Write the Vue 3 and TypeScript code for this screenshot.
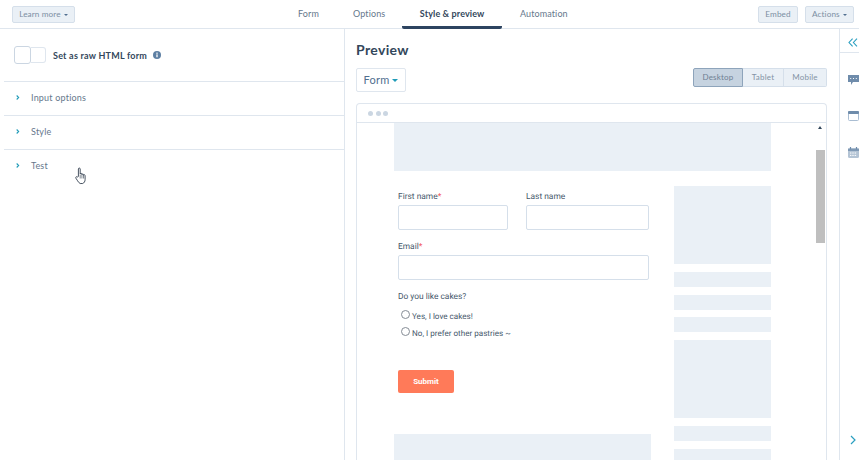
<script setup lang="ts">
const tabs = ['Form', 'Options', 'Style & preview', 'Automation']
const sections = ['Input options', 'Style', 'Test']
const views = ['Desktop', 'Tablet', 'Mobile']
const asideBlocks = [78, 15, 15, 15, 78, 15, 15]
const choices = ['Yes, I love cakes!', 'No, I prefer other pastries ~']
</script>

<template>
  <div class="app">
    <header class="topbar">
      <div class="top-side">
        <button class="btn learn">Learn more <i class="caret"></i></button>
      </div>
      <nav class="tabs">
        <span v-for="(t, i) in tabs" :key="t" class="tab" :class="{ active: i === 2 }">{{ t }}</span>
      </nav>
      <div class="top-side right">
        <button class="btn embed">Embed</button>
        <button class="btn actions">Actions <i class="caret"></i></button>
      </div>
    </header>

    <main class="body">
      <section class="left">
        <div class="raw">
          <div class="toggle"><span class="knob"></span><span class="track"></span></div>
          <strong>Set as raw HTML form</strong>
          <svg class="info" viewBox="0 0 10 10" width="8" height="8">
            <circle cx="5" cy="5" r="5" fill="#5d7fa3" />
            <rect x="4.2" y="4.2" width="1.6" height="3.6" fill="#fff" />
            <rect x="4.2" y="2" width="1.6" height="1.5" fill="#fff" />
          </svg>
        </div>
        <div v-for="s in sections" :key="s" class="section">
          <svg class="chev" viewBox="0 0 6 8" width="4" height="7">
            <path d="M1 1l3 3-3 3" fill="none" stroke="#1f9bb8" stroke-width="1.6" />
          </svg>
          <span>{{ s }}</span>
        </div>
        <svg class="hand" viewBox="0 0 12 18" width="12" height="18">
          <path
            d="M3.4 9.5V2c0-1.3 1.8-1.3 1.8 0v5.2c0-1.2 1.7-1.2 1.7 0v.6c0-1.1 1.6-1.1 1.6 0v.6c0-1 1.6-.9 1.6.2v4c0 1.8-1 3.4-2.4 3.9H5.2c-1.2-.5-1.9-1.6-2.6-2.7L.9 11.2c-.6-1.1.6-2 1.5-1.2z"
            fill="#fff"
            stroke="#33404f"
            stroke-width=".9"
            stroke-linejoin="round"
          />
          <path d="M5.2 8v3.5M6.9 8v3.5M8.5 8.5v3" stroke="#33404f" stroke-width=".6" fill="none" />
        </svg>
      </section>

      <section class="preview">
        <h2>Preview</h2>
        <div class="controls">
          <button class="select">Form <i class="caret teal"></i></button>
          <div class="views">
            <span v-for="(v, i) in views" :key="v" class="view" :class="{ on: i === 0 }">{{ v }}</span>
          </div>
        </div>
        <div class="frame">
          <div class="frame-bar"><i></i><i></i><i></i></div>
          <div class="page">
            <div class="block hero"></div>
            <div class="content">
              <form class="form" @submit.prevent>
                <div class="row">
                  <label class="field first">
                    <span>First name<b>*</b></span>
                    <input type="text" />
                  </label>
                  <label class="field last">
                    <span>Last name</span>
                    <input type="text" />
                  </label>
                </div>
                <label class="field email">
                  <span>Email<b>*</b></span>
                  <input type="text" />
                </label>
                <div class="question">Do you like cakes?</div>
                <div v-for="c in choices" :key="c" class="choice">
                  <i class="radio"></i><span>{{ c }}</span>
                </div>
                <button class="submit">Submit</button>
              </form>
              <aside class="aside">
                <div v-for="(h, i) in asideBlocks" :key="i" class="block" :style="{ height: h + 'px' }"></div>
              </aside>
            </div>
            <div class="block footer"></div>
            <div class="scroll">
              <i class="up"></i>
              <i class="thumb"></i>
            </div>
          </div>
        </div>
      </section>

      <aside class="rail">
        <div class="rail-head">
          <svg viewBox="0 0 10 9" width="10" height="9">
            <path d="M4.6.6L1 4.5l3.6 3.9M9 .6L5.4 4.5 9 8.4" fill="none" stroke="#2a9fc0" stroke-width="1.1" />
          </svg>
        </div>
        <div class="rail-icons">
          <svg viewBox="0 0 11 10" width="11" height="10">
            <path d="M0 0h11v7H5L3 10V7H0z" fill="#6f8cab" />
            <path d="M2.2 3.5h1M5 3.5h1M7.8 3.5h1" stroke="#fff" stroke-width="1" />
          </svg>
          <svg viewBox="0 0 11 10" width="11" height="10">
            <rect x=".5" y=".5" width="10" height="9" rx="1" fill="#fff" stroke="#a9bdd2" />
            <rect y="0" width="11" height="3" rx="1" fill="#6f8cab" />
          </svg>
          <svg viewBox="0 0 11 11" width="11" height="11">
            <rect x="0" y="1.5" width="11" height="9.5" rx="1.5" fill="#b4c4d5" />
            <rect x="0" y="1.5" width="11" height="2.5" fill="#7f99b5" />
            <path d="M2.5 0v2.5M8.5 0v2.5" stroke="#6f8cab" stroke-width="1.2" />
            <path d="M2 6h7M2 8.4h7" stroke="#fff" stroke-width="1" stroke-dasharray="1.4 .9" />
          </svg>
        </div>
        <svg class="rail-next" viewBox="0 0 6 10" width="6" height="10">
          <path d="M1 1l4 4-4 4" fill="none" stroke="#2a9fc0" stroke-width="1.2" />
        </svg>
      </aside>
    </main>
  </div>
</template>

<style>
html,
body {
  margin: 0;
  background: #fff;
}
</style>

<style scoped>
.app {
  width: 859px;
  height: 460px;
  overflow: hidden;
  display: flex;
  flex-direction: column;
  font-family: Lato, "Open Sans", sans-serif;
  color: #33475b;
  background: #fff;
}
.topbar {
  height: 28px;
  flex: none;
  display: flex;
  justify-content: space-between;
  align-items: center;
  padding: 0 5px 0 12px;
  border-bottom: 1px solid #dfe6ee;
  box-sizing: content-box;
  position: relative;
}
.top-side {
  display: flex;
  gap: 7px;
  align-items: center;
}
.btn {
  height: 17px;
  padding: 0;
  border: 1px solid #d5dfea;
  border-radius: 2px;
  background: #eaf0f6;
  color: #7c8fa3;
  font: 8.2px/15px Lato, sans-serif;
  letter-spacing: 0.1px;
  white-space: nowrap;
}
.learn {
  width: 63px;
}
.embed {
  width: 40px;
}
.actions {
  width: 49px;
}
.caret {
  display: inline-block;
  width: 0;
  height: 0;
  margin-left: 1px;
  vertical-align: 1px;
  border: 2.5px solid transparent;
  border-top-color: #516f90;
  border-bottom-width: 0;
}
.caret.teal {
  margin-left: 0;
  border-width: 3px 3px 0;
  border-color: #1f9bb8 transparent transparent;
  vertical-align: 2px;
}
.tabs {
  position: absolute;
  left: 286px;
  top: 0;
  height: 29px;
  display: flex;
}
.tab {
  padding: 0 12px;
  height: 29px;
  line-height: 27px;
  box-sizing: border-box;
  font-size: 9px;
  letter-spacing: 0.12px;
  color: #66788c;
  white-space: nowrap;
  margin-right: 10px;
}
.tab.active {
  color: #33475b;
  font-weight: 700;
  border-bottom: 3px solid #2d4460;
  border-radius: 0 0 2px 2px;
  padding: 0 17.5px;
  margin: 0 6px 0 -5px;
  line-height: 27px;
}
.body {
  flex: 1;
  display: flex;
  min-height: 0;
}
.left {
  width: 345px;
  flex: none;
  box-sizing: border-box;
  border-right: 1px solid #dfe6ee;
  padding-left: 4px;
  position: relative;
}
.raw {
  height: 52px;
  box-sizing: content-box;
  display: flex;
  align-items: center;
  padding-left: 10px;
  font-size: 9px;
  color: #33475b;
  letter-spacing: 0.22px;
}
.raw strong {
  margin: 0 6px 0 7px;
  font-weight: 700;
}
.toggle {
  width: 32px;
  height: 16px;
  display: flex;
  align-items: center;
}
.knob {
  width: 17px;
  height: 18px;
  border: 1px solid #cbd6e2;
  border-radius: 3px;
  box-sizing: border-box;
  background: #fff;
}
.track {
  flex: 1;
  height: 16px;
  border: 1px solid #dfe6ee;
  border-left: 0;
  border-radius: 0 3px 3px 0;
  box-sizing: border-box;
}
.section {
  height: 31px;
  padding-bottom: 2px;
  box-sizing: content-box;
  border-top: 1px solid #dfe6ee;
  display: flex;
  align-items: center;
  font-size: 9px;
  letter-spacing: 0.2px;
  color: #66788c;
  padding-left: 12px;
  gap: 11px;
}
.hand {
  position: absolute;
  left: 75px;
  top: 138px;
}
.preview {
  flex: 1;
  min-width: 0;
  padding: 12px 12px 0 11px;
  display: flex;
  flex-direction: column;
}
h2 {
  margin: 0;
  height: 27px;
  font-size: 14px;
  line-height: 18px;
  font-weight: 700;
  letter-spacing: 0.35px;
  color: #33475b;
}
.controls {
  display: flex;
  justify-content: space-between;
  align-items: flex-start;
  height: 35px;
  flex: none;
}
.select {
  width: 50px;
  height: 24px;
  padding: 0 0 2px;
  background: #fff;
  border: 1px solid #dfe6ee;
  border-radius: 2px;
  color: #516f90;
  font: 11px Lato, sans-serif;
  letter-spacing: 0.2px;
}
.views {
  display: flex;
  height: 19px;
  border-radius: 2px;
}
.view {
  border: 1px solid #d5dfea;
  border-left-width: 0;
  background: #eaf0f6;
  color: #8393a5;
  font-size: 8px;
  line-height: 17px;
  letter-spacing: 0.2px;
  box-sizing: border-box;
  text-align: center;
}
.view.on {
  width: 50px;
  border: 1px solid #8ea4bb;
  background: #c6d3e0;
  color: #6f8093;
  border-radius: 2px 0 0 2px;
}
.view:nth-child(2) {
  width: 41px;
}
.view:nth-child(3) {
  width: 43px;
  border-radius: 0 2px 2px 0;
}
.frame {
  flex: 1;
  min-height: 0;
  border: 1px solid #dfe6ee;
  border-bottom: 0;
  border-radius: 4px 4px 0 0;
  display: flex;
  flex-direction: column;
}
.frame-bar {
  height: 18px;
  flex: none;
  border-bottom: 1px solid #dfe6ee;
  display: flex;
  align-items: center;
  gap: 2.5px;
  padding-left: 11px;
}
.frame-bar i {
  width: 5px;
  height: 5px;
  border-radius: 50%;
  background: #cbd6e2;
}
.page {
  flex: 1;
  min-height: 0;
  overflow: hidden;
  position: relative;
  padding-left: 37px;
}
.block {
  background: #eaf0f6;
}
.hero {
  width: 377px;
  height: 48px;
}
.content {
  display: flex;
  width: 377px;
  height: 248px;
  justify-content: space-between;
  margin-top: 15px;
}
.form {
  width: 251px;
  margin-left: 4px;
  font-family: Roboto, "Liberation Sans", sans-serif;
  font-size: 8.4px;
  color: #46586b;
  text-rendering: geometricPrecision;
}
.row {
  display: flex;
  justify-content: space-between;
}
.field {
  display: block;
}
.field span {
  display: block;
  height: 19px;
  line-height: 22px;
}
.field b {
  color: #f2545b;
  font-weight: 400;
}
.field input {
  display: block;
  width: 100%;
  height: 25px;
  box-sizing: border-box;
  border: 1px solid #d5dfea;
  border-radius: 2px;
  background: #fff;
  padding: 0;
}
.first {
  width: 110px;
}
.last {
  width: 123px;
}
.email {
  margin-top: 6px;
}
.question {
  margin-top: 10px;
  line-height: 15px;
}
.choice {
  display: flex;
  align-items: center;
  height: 17px;
  padding-left: 3px;
  gap: 2px;
  font-size: 8.1px;
}
.question + .choice {
  margin-top: 2px;
}
.radio {
  width: 9px;
  height: 9px;
  box-sizing: border-box;
  border: 1px solid #858c95;
  border-radius: 50%;
  margin-top: -2px;
  background: #fff;
}
.submit {
  display: block;
  margin-top: 29px;
  width: 56px;
  height: 23px;
  padding: 0;
  border: 0;
  border-radius: 2px;
  background: #ff7a59;
  color: #fff;
  font: 700 8px Roboto, sans-serif;
}
.aside {
  width: 97px;
  flex: none;
  display: flex;
  flex-direction: column;
  gap: 7.8px;
}
.aside .block {
  flex: none;
}
.footer {
  width: 257px;
  height: 40px;
}
.scroll {
  position: absolute;
  right: 1px;
  top: 0;
  width: 9px;
  height: 121px;
  padding-top: 3px;
  box-sizing: border-box;
}
.up {
  display: block;
  width: 0;
  height: 0;
  margin-left: 2px;
  border: 2.5px solid transparent;
  border-bottom: 3px solid #33475b;
  border-top-width: 0;
}
.thumb {
  display: block;
  height: 93px;
  margin-top: 21px;
  background: #bfbfbf;
}
.rail {
  width: 20px;
  flex: none;
  box-sizing: border-box;
  border-left: 1px solid #dfe6ee;
  display: flex;
  flex-direction: column;
}
.rail-head {
  height: 24px;
  flex: none;
  border-bottom: 1px solid #dfe6ee;
  padding: 9px 0 0 8px;
  box-sizing: border-box;
  line-height: 0;
}
.rail-icons {
  display: flex;
  flex-direction: column;
  gap: 26px;
  padding: 22px 0 0 8px;
  line-height: 0;
}
.rail-next {
  margin: auto 0 15px 10px;
}
</style>
